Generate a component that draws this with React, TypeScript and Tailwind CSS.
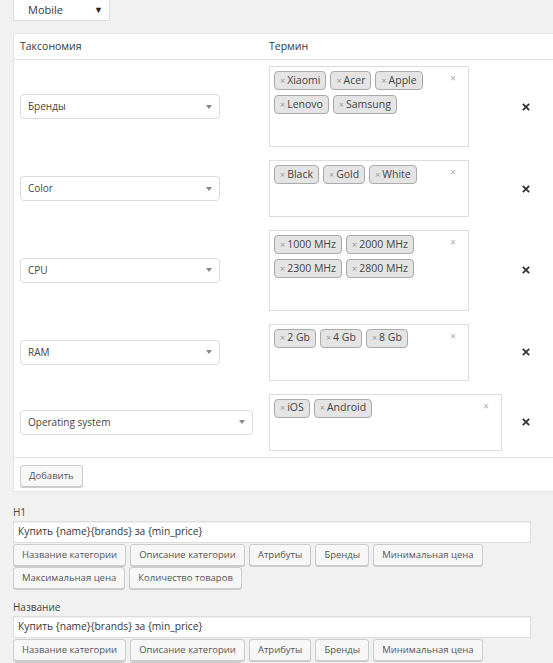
import React from "react";

type Row = { name: string; tags: string[]; wide?: boolean };

const rows: Row[] = [
  { name: "Бренды", tags: ["Xiaomi", "Acer", "Apple", "Lenovo", "Samsung"] },
  { name: "Color", tags: ["Black", "Gold", "White"] },
  { name: "CPU", tags: ["1000 MHz", "2000 MHz", "2300 MHz", "2800 MHz"] },
  { name: "RAM", tags: ["2 Gb", "4 Gb", "8 Gb"] },
  { name: "Operating system", tags: ["iOS", "Android"], wide: true },
];

const vars = [
  "Название категории",
  "Описание категории",
  "Атрибуты",
  "Бренды",
  "Минимальная цена",
  "Максимальная цена",
  "Количество товаров",
];

function WpButton({ children }: { children: React.ReactNode }) {
  return (
    <button className="h-[22px] px-[8px] border border-[#cccccc] bg-[#f7f7f7] rounded-[3px] shadow-[0_1px_0_#cccccc] text-[9.5px] text-[#555555] leading-none whitespace-nowrap">
      {children}
    </button>
  );
}

function Select({ value, wide }: { value: string; wide?: boolean }) {
  return (
    <div
      className={`${wide ? "w-[233px]" : "w-[200px]"} h-[25px] bg-white border border-[#dcdcdc] rounded-[4px] flex items-center justify-between pl-[7px] pr-[7px] text-[10px] text-[#444444]`}
    >
      <span>{value}</span>
      <span className="w-0 h-0 border-x-[3px] border-x-transparent border-t-[4px] border-t-[#888888]" />
    </div>
  );
}

function TagBox({ tags, wide }: { tags: string[]; wide?: boolean }) {
  return (
    <div
      className={`${wide ? "w-[233px]" : "w-[200px]"} relative bg-white border border-[#dddddd] pl-[4px] pt-[4px] pb-[32px] pr-[24px]`}
    >
      <div className="flex flex-wrap gap-x-[4px] gap-y-[5px]">
        {tags.map((t) => (
          <span
            key={t}
            className="h-[19px] flex items-center pl-[5px] pr-[5px] border border-[#aaaaaa] rounded-[4px] bg-[#e4e4e4] text-[10.5px] text-[#444444] whitespace-nowrap"
          >
            <span className="text-[#999999] text-[9px] mr-[2px]">×</span>
            {t}
          </span>
        ))}
      </div>
      <span className="absolute top-[6px] right-[12px] text-[10px] leading-none text-[#aaaaaa]">×</span>
    </div>
  );
}

function Field({ label }: { label: string }) {
  return (
    <div className="w-[518px]">
      <div className="text-[10px] leading-[15px] text-[#444444]">{label}</div>
      <div className="mt-px h-[22px] bg-white border border-[#dddddd] shadow-[inset_0_1px_2px_rgba(0,0,0,0.07)] flex items-center pl-[4px] text-[10.25px] text-[#32373c]">
        Купить {"{name}{brands}"} за {"{min_price}"}
      </div>
      <div className="flex flex-wrap gap-x-[4px] gap-y-[1px] mt-px">
        {vars.map((v) => (
          <WpButton key={v}>{v}</WpButton>
        ))}
      </div>
    </div>
  );
}

export default function App() {
  return (
    <div className="min-h-screen bg-[#f1f1f1] overflow-hidden font-['Open_Sans',sans-serif] text-[#32373c]">
      <div className="pl-[13px]">
        <div className="-mt-px w-[97px] h-[22px] bg-white border border-[#dddddd] flex items-center justify-between pl-[14px] pr-[6px] text-[11px] text-[#32373c]">
          <span>Mobile</span>
          <span className="text-[9px] text-[#222222]">▼</span>
        </div>

        <div className="mt-[12px] w-[600px] bg-white border border-[#e5e5e5]">
          <div className="h-[26px] flex items-center border-b border-[#e1e1e1] text-[10.5px] text-[#32373c]">
            <div className="w-[249px] pl-[6px]">Таксономия</div>
            <div className="pl-[6px]">Термин</div>
          </div>
          {rows.map((r) => (
            <div key={r.name} className="flex items-center py-[6.4px]">
              <div className="w-[249px] pl-[6px]">
                <Select value={r.name} wide={r.wide} />
              </div>
              <div className="w-[245px] pl-[6px]">
                <TagBox tags={r.tags} wide={r.wide} />
              </div>
              <div className="w-[36px] flex justify-center">
                <svg width="8" height="8" viewBox="0 0 8 8">
                  <path d="M0.8 0.8L7.2 7.2M7.2 0.8L0.8 7.2" stroke="#333333" strokeWidth="1.8" />
                </svg>
              </div>
            </div>
          ))}
          <div className="flex border-t border-[#e1e1e1] pt-[7px] pb-[4px] pl-[6px]">
            <WpButton>Добавить</WpButton>
          </div>
        </div>

        <div className="mt-[13px]">
          <Field label="H1" />
        </div>
        <div className="mt-[11px]">
          <Field label="Название" />
        </div>
      </div>
    </div>
  );
}
